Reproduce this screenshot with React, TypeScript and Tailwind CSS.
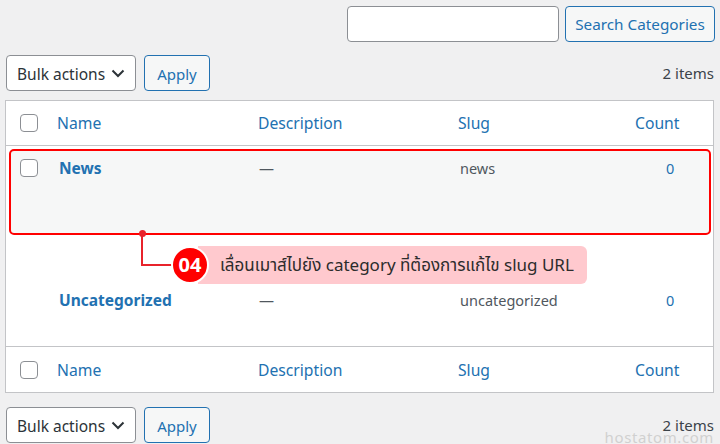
import React from 'react';

const font = "font-['Noto_Sans','Noto_Sans_Thai','Loma','Garuda','Tlwg_Typo',sans-serif]";

function Checkbox() {
  return <div className="w-[18px] h-[18px] rounded-[4px] border border-[#8c8f94] bg-white" />;
}

function Chevron() {
  return (
    <svg width="14" height="9" viewBox="0 0 14 9" className="ml-auto">
      <path d="M1.5 1.5 L7 7 L12.5 1.5" fill="none" stroke="#2c3338" strokeWidth="2" />
    </svg>
  );
}

function TableNav({ top }: { top: string }) {
  return (
    <div className={`flex items-center pl-[6px] pr-[6px] ${top}`}>
      <div className="flex items-center whitespace-nowrap w-[130px] h-[36px] rounded-[4px] border border-[#8c8f94] bg-white pl-[10px] pr-[10px] text-[15.5px] text-[#2c3338]">
        <span className="pt-[3px]">Bulk actions</span>
        <Chevron />
      </div>
      <div className="ml-[8px] flex items-center justify-center w-[66px] h-[36px] pt-[2px] rounded-[4px] border border-[#2271b1] bg-[#f6f7f7] text-[15px] text-[#2271b1]">
        Apply
      </div>
      <div className="ml-auto text-[15px] leading-[16px] text-[#3c434a]">2 items</div>
    </div>
  );
}

const cols = 'grid grid-cols-[41px_201px_200px_177px_1fr]';

function HeadRow({ border }: { border: string }) {
  return (
    <div className={`${cols} items-center h-[45px] ${border} border-[#c3c4c7] text-[15.7px] text-[#2271b1]`}>
      <div className="pl-[14px]"><Checkbox /></div>
      <div className="pl-[10px] pt-[2px]">Name</div>
      <div className="pl-[10px] pt-[2px]">Description</div>
      <div className="pl-[10px] pt-[2px]">Slug</div>
      <div className="pl-[10px] pt-[2px]">Count</div>
    </div>
  );
}

export default function App() {
  return (
    <div className={`relative w-[720px] h-[444px] overflow-hidden bg-[#f0f0f1] ${font}`}>
      {/* search */}
      <div className="flex justify-end gap-[6px] pt-[6px] pr-[5px]">
        <div className="w-[212px] h-[36px] rounded-[4px] border border-[#8c8f94] bg-white" />
        <div className="flex items-center justify-center w-[150px] h-[36px] pt-[1px] rounded-[4px] border border-[#2271b1] bg-[#f6f7f7] text-[15.3px] text-[#2271b1]">
          Search Categories
        </div>
      </div>

      <TableNav top="mt-[13px]" />

      {/* table */}
      <div className="mt-[9px] ml-[5px] w-[709px] border border-[#c3c4c7] bg-white">
        <HeadRow border="border-b" />

        <div className="relative h-[89px]">
          <div className="absolute left-[3px] right-[2px] top-[3px] bottom-0 rounded-[5px] border-2 border-[#ff0000] bg-[#f6f7f7]" />
          <div className={`relative ${cols} items-start pt-[12px] text-[15px]`}>
            <div className="pl-[14px] pt-[1px]"><Checkbox /></div>
            <div className="pl-[12px] font-bold text-[#2271b1] text-[15.5px] leading-[20px]">News</div>
            <div className="pl-[11px] text-[#50575e] leading-[20px]">—</div>
            <div className="pl-[12px] text-[#50575e] text-[14.5px] leading-[20px]">news</div>
            <div className="pl-[41px] text-[#2271b1] text-[14.5px] leading-[20px]">0</div>
          </div>
        </div>

        <div className={`${cols} items-start h-[112px] pt-[55px] border-b border-[#c3c4c7] text-[15px]`}>
          <div />
          <div className="pl-[12px] font-bold text-[#2271b1] text-[15.5px] leading-[20px]">Uncategorized</div>
          <div className="pl-[11px] text-[#50575e] leading-[20px]">—</div>
          <div className="pl-[12px] text-[#50575e] text-[14.5px] leading-[20px]">uncategorized</div>
          <div className="pl-[41px] text-[#2271b1] text-[14.5px] leading-[20px]">0</div>
        </div>

        <HeadRow border="" />
      </div>

      <TableNav top="mt-[14px]" />

      <div className="absolute right-[6px] bottom-[1px] text-[15px] leading-[12px] text-[#d0d0d0] tracking-[0.6px]">hostatom.com</div>

      {/* annotation */}
      <div className="absolute left-[139px] top-[230px] w-[7px] h-[7px] rounded-full bg-[#e8232b]" />
      <div className="absolute left-[141px] top-[233px] w-[2px] h-[33px] bg-[#e8232b]" />
      <div className="absolute left-[141px] top-[264px] w-[36px] h-[2px] bg-[#e8232b]" />
      <div className="absolute left-[198px] top-[246px] w-[389px] h-[38px] rounded-r-[6px] bg-[#ffc9ce] flex items-center pl-[22px] text-[17px] text-[#2c2c2c]">
        เลื่อนเมาส์ไปยัง category ที่ต้องการแก้ไข slug URL
      </div>
      <div className="absolute left-[171px] top-[246px] w-[38px] h-[38px] rounded-full bg-[#ff0000] border-2 border-white flex items-center justify-center text-white font-bold text-[20px]">
        04
      </div>
    </div>
  );
}
